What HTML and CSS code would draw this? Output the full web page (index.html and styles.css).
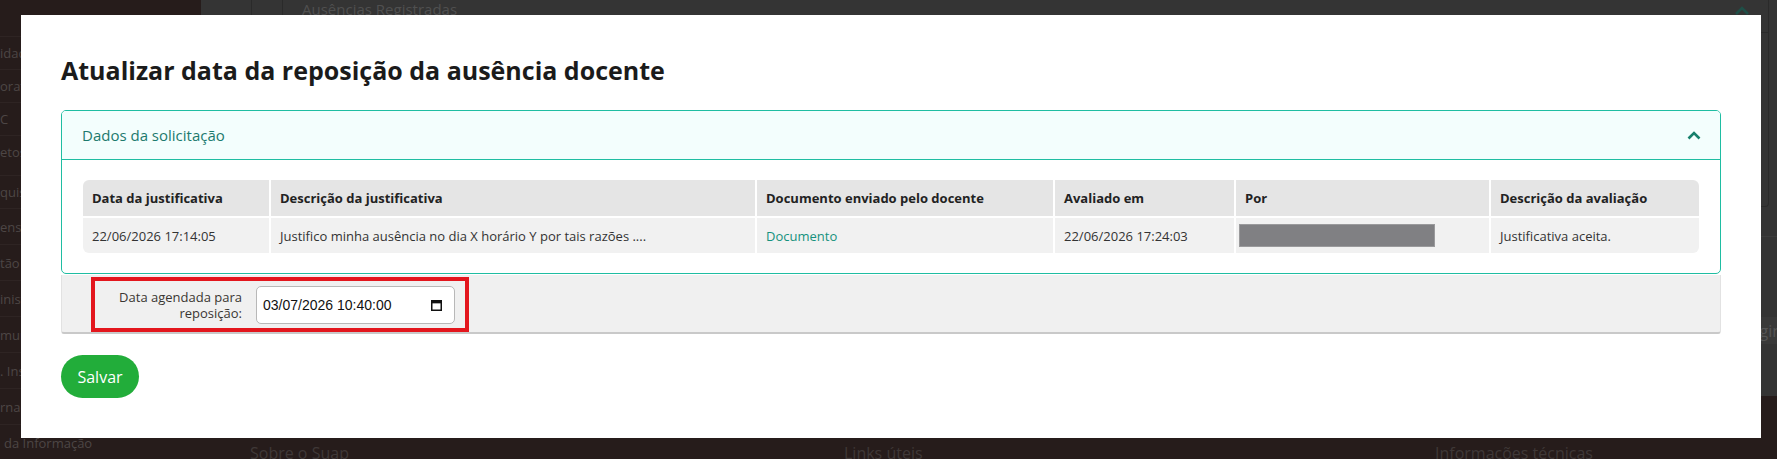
FILE: index.html
```html
<!DOCTYPE html>
<html lang="pt-BR">
<head>
<meta charset="utf-8">
<title>Atualizar data da reposição</title>
<link rel="stylesheet" href="styles.css">
</head>
<body>
<div class="page">
  <aside class="sidebar">
    <ul class="menu">
      <li>idades</li>
      <li>oratórios</li>
      <li>C</li>
      <li>etos</li>
      <li class="group-start">quisa</li>
      <li>ensão</li>
      <li>tão</li>
      <li>inistração</li>
      <li>municação</li>
      <li>. Institucionais</li>
      <li>rnacional</li>
      <li class="indent">da Informação</li>
    </ul>
  </aside>
  <div class="main">
    <div class="content">
      <section class="card">
        <header class="card-head">
          <span class="tab"></span>
          <span class="tab tab-last"></span>
          <h3 class="card-title">Ausências Registradas</h3>
          <svg class="card-toggle" width="16" height="10" viewBox="0 0 16 10"><polyline points="2,8 8,2 14,8" fill="none" stroke="#1f4f47" stroke-width="2.5"/></svg>
        </header>
      </section>
      <div class="divider"></div>
      <div class="pager"><span>Página</span></div>
    </div>
    <footer class="footer">
      <h4>Sobre o Suap</h4>
      <h4>Links úteis</h4>
      <h4>Informações técnicas</h4>
    </footer>
  </div>
</div>

<div class="modal">
  <h2 class="modal-title">Atualizar data da reposição da ausência docente</h2>

  <div class="panel">
    <div class="panel-head">
      <span>Dados da solicitação</span>
      <svg class="chevron" width="14" height="9" viewBox="0 0 14 9"><polyline points="1.5,7.5 7,2 12.5,7.5" fill="none" stroke="#17806c" stroke-width="2.6"/></svg>
    </div>
    <div class="panel-body">
      <table class="grid">
        <colgroup>
          <col style="width:188px">
          <col style="width:486px">
          <col style="width:298px">
          <col style="width:181px">
          <col style="width:255px">
          <col style="width:208px">
        </colgroup>
        <thead>
          <tr>
            <th>Data da justificativa</th>
            <th>Descrição da justificativa</th>
            <th>Documento enviado pelo docente</th>
            <th>Avaliado em</th>
            <th>Por</th>
            <th>Descrição da avaliação</th>
          </tr>
        </thead>
        <tbody>
          <tr>
            <td>22/06/2026 17:14:05</td>
            <td>Justifico minha ausência no dia X horário Y por tais razões ....</td>
            <td><a class="link" href="#">Documento</a></td>
            <td>22/06/2026 17:24:03</td>
            <td class="cell-redacted"><span class="redacted"></span></td>
            <td>Justificativa aceita.</td>
          </tr>
        </tbody>
      </table>
    </div>
  </div>

  <div class="form-box">
    <div class="field">
      <label class="field-label">Data agendada para reposição:</label>
      <div class="date-input">
        <span class="date-value">03/07/2026 10:40:00</span>
        <svg class="cal" width="11" height="12" viewBox="0 0 11 12"><rect x="0.75" y="1.75" width="9.5" height="9.5" fill="none" stroke="#111" stroke-width="1.5"/><rect x="0.75" y="1.75" width="9.5" height="2.6" fill="#111"/></svg>
      </div>
    </div>
  </div>

  <div class="actions">
    <button class="btn-save" type="button">Salvar</button>
  </div>
</div>
</body>
</html>
```
FILE: styles.css
```css
* { box-sizing: border-box; }

html, body {
  margin: 0;
  height: 100%;
  overflow: hidden;
}

body {
  font-family: "Open Sans", "Noto Sans", sans-serif;
  background: #261c1b;
}

/* ---------- page behind the dialog (dimmed) ---------- */
.page {
  display: grid;
  grid-template-columns: 201px 1fr;
  height: 459px;
}

.sidebar {
  background: #261c1b;
  overflow: hidden;
}

.menu {
  list-style: none;
  margin: 0;
  padding: 36px 0 0;
}

.menu li {
  height: 33px;
  line-height: 33px;
  font-size: 13px;
  color: #4d4645;
  white-space: nowrap;
  border-top: 1px solid #2e2423;
}

.menu li.group-start { margin-top: 7px; }
.menu li.group-start ~ li { height: 36px; line-height: 36px; }
.menu li.indent { padding-left: 4px; }

.main {
  display: grid;
  grid-template-rows: 396px 1fr;
  overflow: hidden;
}

.content {
  background: #343434;
  overflow: hidden;
}

.card {
  margin: 0 8px 0 30px;
  height: 207px;
  border-right: 1px solid #2a2a2a;
  border-bottom: 1px solid #2a2a2a;
  border-radius: 0 0 4px 0;
}

.card-head {
  display: flex;
  align-items: flex-start;
  height: 33px;
  border-bottom: 1px solid #2b2b2b;
  padding-left: 20px;
}

.tab {
  width: 31px;
  height: 33px;
  border-left: 1px solid #2a2a2a;
}

.tab-last { width: 1px; }

.card-title {
  margin: 0;
  padding-left: 19px;
  font-size: 15px;
  line-height: 18px;
  font-weight: 400;
  color: #505050;
  flex: 1;
}

.card-toggle { margin: 6px 18px 0 0; }

.divider {
  margin-top: 29px;
  border-top: 1px solid #3c3c3c;
}

.pager {
  margin-top: 80px;
  height: 27px;
  background: #393939;
  display: flex;
  justify-content: flex-end;
  align-items: center;
  margin-right: -14px;
  font-size: 16px;
  color: #555;
}

.footer {
  background: #261c1b;
  display: grid;
  grid-template-columns: 594px 591px 1fr;
  padding: 46px 0 0 49px;
}

.footer h4 {
  margin: 0;
  font-size: 16px;
  line-height: 22px;
  font-weight: 400;
  color: #3f3837;
  white-space: nowrap;
}

/* ---------- dialog ---------- */
.modal {
  position: fixed;
  left: 21px;
  top: 15px;
  width: 1740px;
  height: 423px;
  background: #fff;
  padding: 40px;
}

.modal-title {
  margin: 0 0 25px;
  font-size: 25px;
  line-height: 30px;
  font-weight: 700;
  color: #1b1b1b;
}

.panel {
  border: 1px solid #1fbda2;
  border-radius: 5px;
  overflow: hidden;
}

.panel-head {
  height: 49px;
  background: #f3fefd;
  border-bottom: 1px solid #1fbda2;
  display: flex;
  align-items: center;
  justify-content: space-between;
  padding: 0 19px 0 20px;
  font-size: 15px;
  color: #1c7a6d;
}

.panel-body {
  padding: 20px 21px 20px;
}

.grid {
  width: 1616px;
  table-layout: fixed;
  border-collapse: separate;
  border-spacing: 0;
  border-radius: 6px;
  overflow: hidden;
  font-size: 13px;
  text-align: left;
}

.grid th,
.grid td {
  padding: 0 9px;
  border-right: 2px solid #fff;
  white-space: nowrap;
}

.grid th:last-child,
.grid td:last-child { border-right: 0; }

.grid th {
  height: 38px;
  background: #e5e5e5;
  border-bottom: 2px solid #fff;
  font-weight: 700;
  color: #222;
}

.grid td {
  height: 35px;
  background: #f1f1f1;
  color: #333;
}

.grid td.cell-redacted { padding-left: 3px; }

.redacted {
  display: block;
  width: 196px;
  height: 23px;
  background: #808083;
  border: 1px solid #9a9a9c;
}

.link {
  color: #16917e;
  text-decoration: none;
}

.form-box {
  margin-top: 1px;
  background: #f0f0f0;
  border: 1px solid #e2e2e2;
  border-top: 0;
  border-bottom: 2px solid #c9c9c9;
  border-radius: 0 0 3px 3px;
  padding: 2px 0 0 29px;
}

.field {
  display: inline-flex;
  align-items: center;
  height: 55px;
  border: 4px solid #e3161d;
  padding-right: 10px;
}

.field-label {
  width: 147px;
  margin-right: 14px;
  text-align: right;
  font-size: 13px;
  line-height: 16px;
  color: #3a3632;
}

.date-input {
  width: 199px;
  height: 38px;
  background: #fff;
  border: 1px solid #b8b8b8;
  border-radius: 5px;
  display: flex;
  align-items: center;
  justify-content: space-between;
  padding: 0 12px 0 6px;
}

.date-value {
  font-family: "Liberation Sans", Arial, sans-serif;
  font-size: 14px;
  color: #111;
}

.actions { margin-top: 21px; }

.btn-save {
  width: 78px;
  height: 43px;
  border: 0;
  border-radius: 22px;
  background: #22ad3a;
  color: #fff;
  font-family: "Open Sans", sans-serif;
  font-size: 16px;
  padding: 0;
}
```
